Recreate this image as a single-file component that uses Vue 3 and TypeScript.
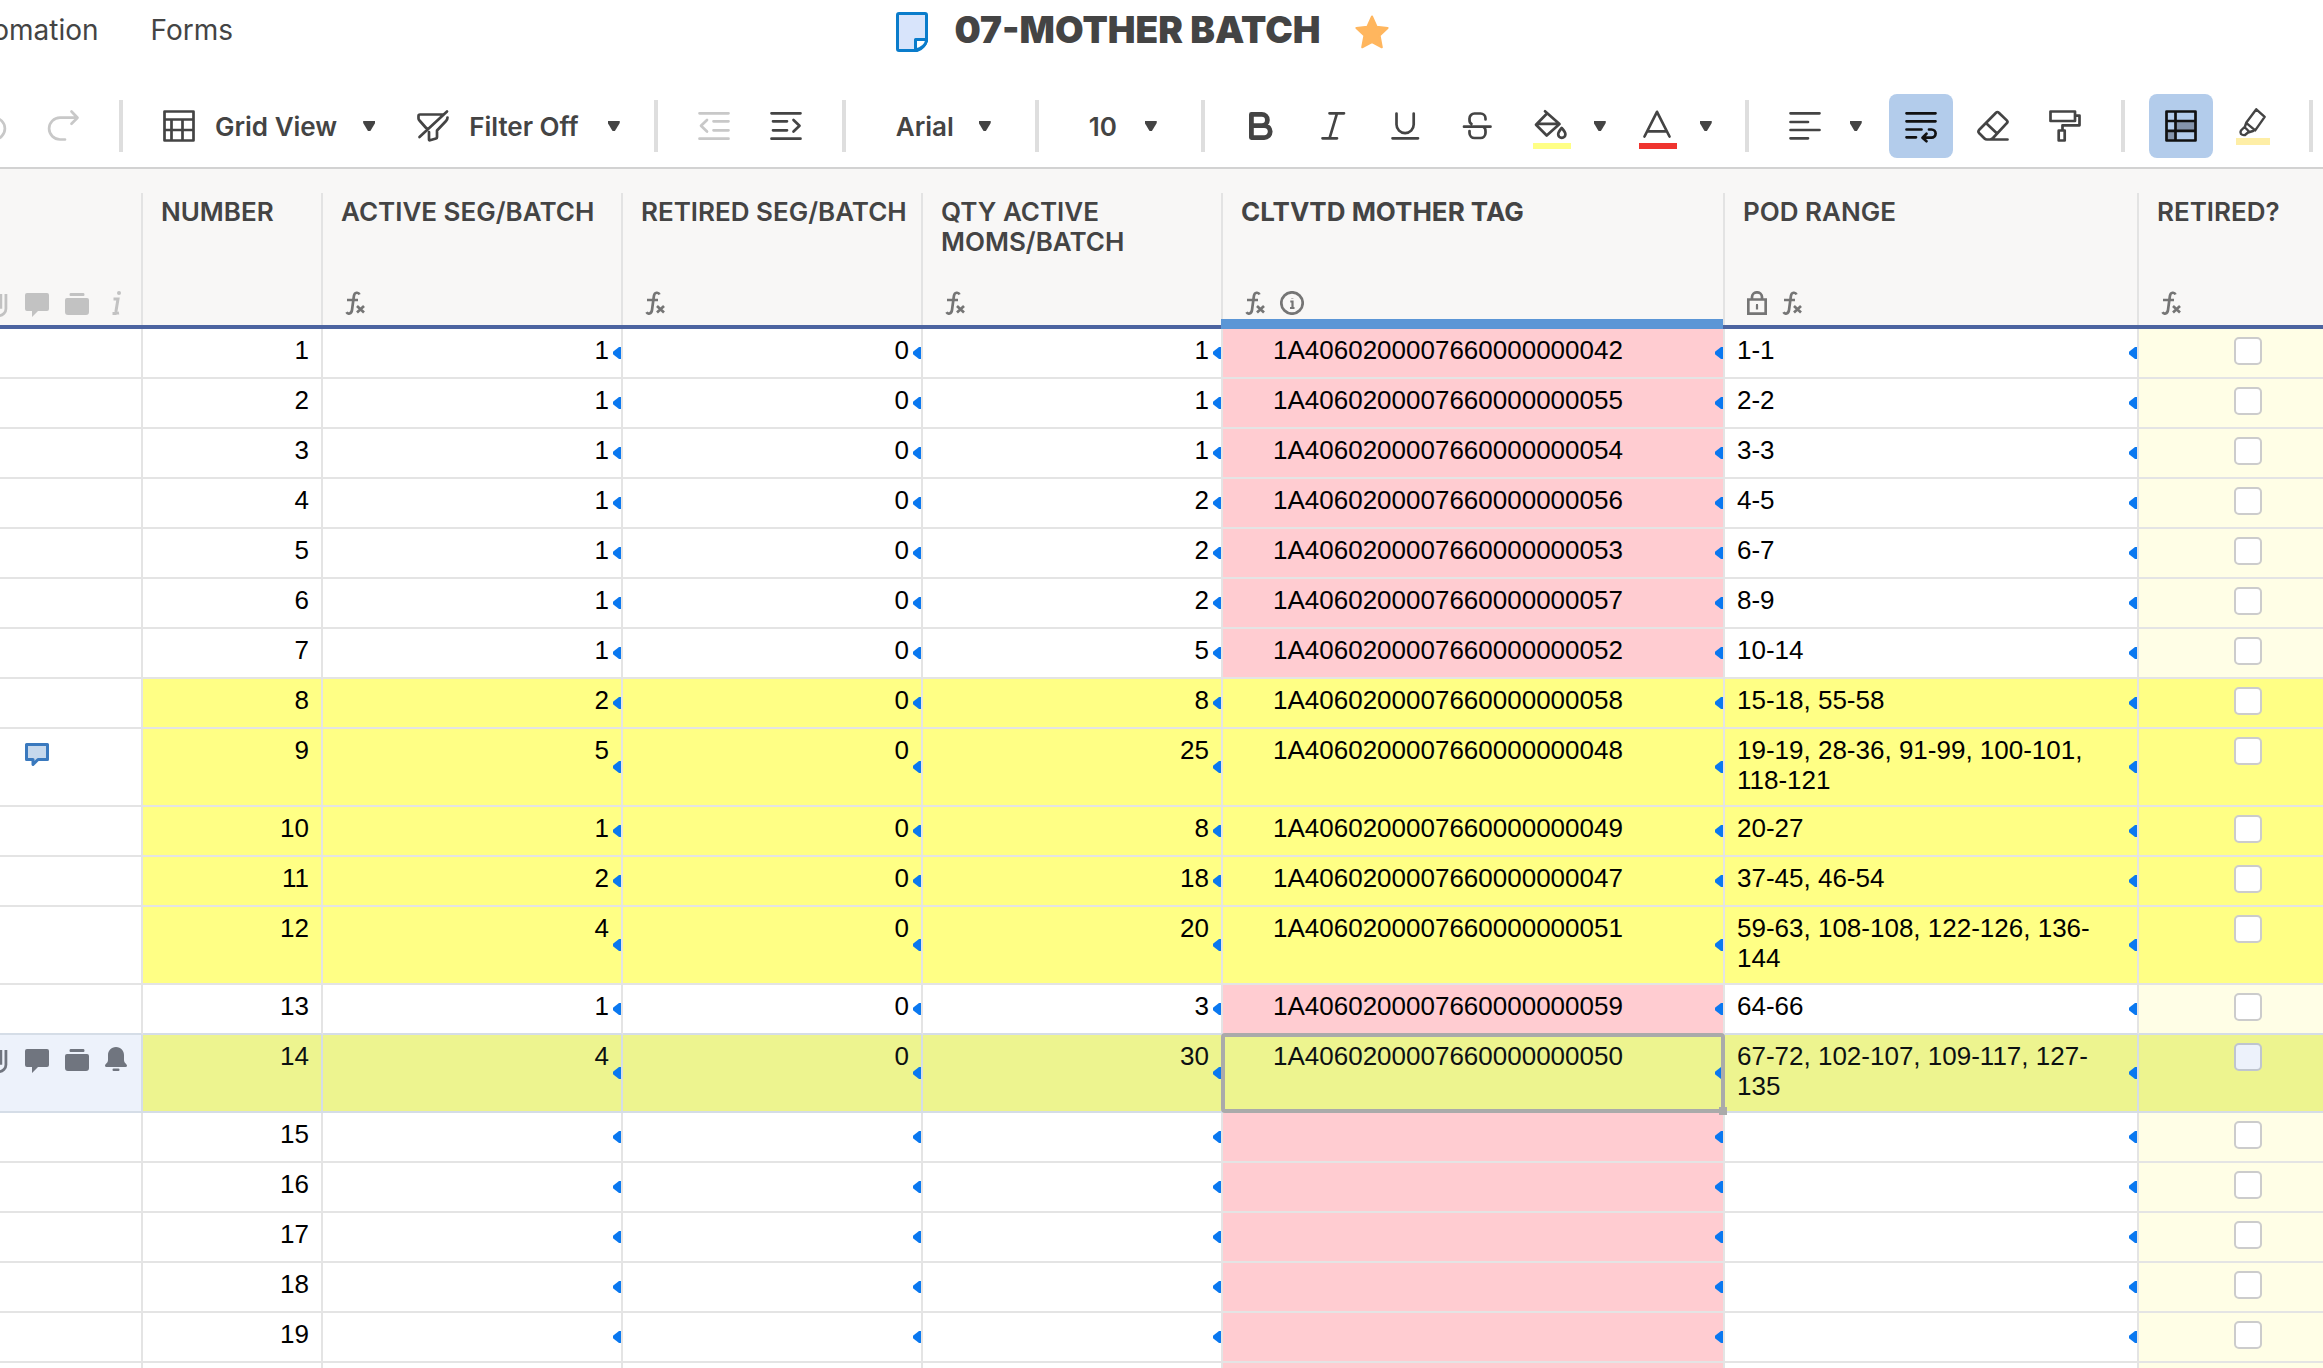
<script setup lang="ts">
import { ref } from 'vue'

interface Row {
  num: number
  active: string
  retired: string
  qty: string
  tag: string
  pods: string
  tone: 'plain' | 'flag'
  comment?: boolean
}

const row = (
  num: number,
  active = '',
  retired = '',
  qty = '',
  tag = '',
  pods = '',
  tone: Row['tone'] = 'plain',
  comment = false,
): Row => ({ num, active, retired, qty, tag: tag && '1A40602000076600000000' + tag, pods, tone, comment })

// A zero number marks the spare row at the end of the sheet.
const rows: Row[] = [
  row(1, '1', '0', '1', '42', '1-1'),
  row(2, '1', '0', '1', '55', '2-2'),
  row(3, '1', '0', '1', '54', '3-3'),
  row(4, '1', '0', '2', '56', '4-5'),
  row(5, '1', '0', '2', '53', '6-7'),
  row(6, '1', '0', '2', '57', '8-9'),
  row(7, '1', '0', '5', '52', '10-14'),
  row(8, '2', '0', '8', '58', '15-18, 55-58', 'flag'),
  row(9, '5', '0', '25', '48', '19-19, 28-36, 91-99, 100-101, 118-121', 'flag', true),
  row(10, '1', '0', '8', '49', '20-27', 'flag'),
  row(11, '2', '0', '18', '47', '37-45, 46-54', 'flag'),
  row(12, '4', '0', '20', '51', '59-63, 108-108, 122-126, 136-144', 'flag'),
  row(13, '1', '0', '3', '59', '64-66'),
  row(14, '4', '0', '30', '50', '67-72, 102-107, 109-117, 127-135', 'flag'),
  row(15),
  row(16),
  row(17),
  row(18),
  row(19),
  row(0),
]

const columns = [
  { key: 'num', label: 'NUMBER', icons: [] as string[] },
  { key: 'active', label: 'ACTIVE SEG/BATCH', icons: ['fx'] },
  { key: 'retired', label: 'RETIRED SEG/BATCH', icons: ['fx'] },
  { key: 'qty', label: 'QTY ACTIVE MOMS/BATCH', icons: ['fx'] },
  { key: 'tag', label: 'CLTVTD MOTHER TAG', icons: ['fx', 'info'] },
  { key: 'pods', label: 'POD RANGE', icons: ['lock', 'fx'] },
  { key: 'done', label: 'RETIRED?', icons: ['fx'] },
]

const selectedRow = ref(14)
const selectedColumn = ref('tag')
const font = ref('Arial')
const size = ref('10')
</script>

<template>
  <div class="app">
    <header class="topbar">
      <nav class="menu">
        <a href="#automation">Automation</a>
        <a href="#forms">Forms</a>
      </nav>
      <div class="title">
        <svg class="sheet" viewBox="0 0 32 40" aria-hidden="true">
          <path d="M3 1.5h26q1.500 0 1.500 1.500v24.500Q29 36 21 38.500H3q-1.500 0-1.500-1.500V3Q1.500 1.500 3 1.500z" fill="#d8e4fb" stroke="#0a7ccb" stroke-width="3" />
          <path d="M19.500 38V27.500H31Q29 36 19.500 38z" fill="#fff" stroke="#0a7ccb" stroke-width="3" stroke-linejoin="round" />
        </svg>
        <h1>07-MOTHER BATCH</h1>
        <button class="star" type="button" aria-label="Favorite">
          <svg viewBox="0 0 34 34"><path d="M17 1.500l4.600 10.200 11 1.200-8 7.600 2.200 11.800L17 27l-9.800 5.300 2.200-11.800-8-7.600 11-1.200z" fill="#ffb65e" stroke="#ffb65e" stroke-width="2" stroke-linejoin="round" /></svg>
        </button>
      </div>
    </header>

    <div class="toolbar" role="toolbar" aria-label="Formatting">
      <div class="history">
        <button class="tool faint" type="button" aria-label="Undo">
          <svg viewBox="0 0 32 32"><path d="M2 7.700H19a10.900 10.900 0 0 1 0 21.800H14M8 1.500L2 7.700l6 6" /></svg>
        </button>
        <button class="tool faint" type="button" aria-label="Redo">
          <svg viewBox="0 0 32 32"><path d="M30 7.700H13a10.900 10.900 0 0 0 0 21.800H18M24.500 1.500l6 6.200-6 6" /></svg>
        </button>
      </div>
      <span class="sep"></span>
      <button class="wide" type="button">
        <svg viewBox="0 0 32 32"><path d="M1.500 1.500h29v29h-29zM1.500 9.500h29M1.500 20h29M8.500 9.500v21M19.500 9.500v21" /></svg>
        <span>Grid View</span><i class="caret"></i>
      </button>
      <button class="wide filter" type="button">
        <svg viewBox="0 0 32 32"><path d="M26 4.500H3q-1.500 0-1.500 1.500v2.500q0 1 1 2L10 19M12 22v7.500q0 1 1 .8l6-1.800q1-.3 1-1.300V20.500l9-9.500q1.500-1.500 1.500-3.500M30 1.500L2.500 27" /></svg>
        <span>Filter Off</span><i class="caret"></i>
      </button>
      <span class="sep"></span>
      <div class="group">
        <button class="tool faint" type="button" aria-label="Outdent">
          <svg viewBox="0 0 32 32"><path d="M1.500 3.300h29M15.500 11.300h15M15.500 20.300h15M1.500 28.700h29M9 10l-6 5.800L9 21.500" /></svg>
        </button>
        <button class="tool" type="button" aria-label="Indent">
          <svg viewBox="0 0 32 32"><path d="M1.500 3.300h29M3 11.300h14M3 20.300h14M1.500 28.700h29M23.500 10l6 5.800-6 5.700" /></svg>
        </button>
      </div>
      <span class="sep"></span>
      <label class="picker font">
        <select v-model="font" aria-label="Font family">
          <option>Arial</option>
          <option>Tahoma</option>
        </select>
        <i class="caret"></i>
      </label>
      <span class="sep"></span>
      <label class="picker size">
        <select v-model="size" aria-label="Font size">
          <option>10</option>
          <option>12</option>
        </select>
        <i class="caret"></i>
      </label>
      <span class="sep"></span>
      <div class="group">
        <button class="tool" type="button" aria-label="Bold">
          <svg viewBox="0 0 32 32"><path stroke-width="4.800" d="M6.400 4.400h10.400a5.500 5.500 0 0 1 0 11.200H6.400zM6.400 15.600h12.800a6 6 0 0 1 0 12H6.400z" /></svg>
        </button>
        <button class="tool" type="button" aria-label="Italic">
          <svg viewBox="0 0 32 32"><path d="M12.500 3.300h14.500M5.500 28.300H20M20 3.300l-7.500 25" /></svg>
        </button>
        <button class="tool" type="button" aria-label="Underline">
          <svg viewBox="0 0 32 32"><path d="M7.500 3.500v11a8.600 8.600 0 0 0 17.200 0v-11M3.500 28.300H29" /></svg>
        </button>
        <button class="tool" type="button" aria-label="Strikethrough">
          <svg viewBox="0 0 32 32"><path d="M24.500 9.500v-1a5 5 0 0 0-5-5h-6a5 5 0 0 0-5 5V10q0 3 2 4M3 16.700h26.500M8.500 21v2a5 5 0 0 0 5 5h6a5 5 0 0 0 5-5v-2q0-3-2-4" /></svg>
        </button>
        <button class="split" type="button" aria-label="Background color">
          <svg class="swatch" viewBox="0 0 38 32">
            <path d="M12 1.300l14.500 12.800L13.700 25.500 3 14.700 14 3.500M4 13.900h21" />
            <path d="M28.700 18q3.700 4 3.700 6.200a3.500 3.500 0 0 1-7.200 0q0-2.200 3.500-6.200z" />
            <path d="M0 33h38v6H0z" fill="#ffff85" stroke="none" />
          </svg>
          <i class="caret"></i>
        </button>
        <button class="split" type="button" aria-label="Text color">
          <svg class="swatch" viewBox="0 0 38 32">
            <path d="M5.500 26.500L18 1.800l12.500 24.700M9 21.300h18" />
            <path d="M0 33h38v6H0z" fill="#ef342f" stroke="none" />
          </svg>
          <i class="caret"></i>
        </button>
      </div>
      <span class="sep"></span>
      <div class="group">
        <button class="split align" type="button" aria-label="Alignment">
          <svg viewBox="0 0 32 32"><path d="M1.500 3.300h29M1.500 12h17.500M1.500 20h29M1.500 28.300h17.500" /></svg>
          <i class="caret"></i>
        </button>
        <button class="tool on" type="button" aria-label="Wrap text" aria-pressed="true">
          <svg viewBox="0 0 32 32"><path d="M1.500 3.300h29M1.500 11.300h29M1.500 19.500h15M1.500 27.300H11M24 19.500h2.500a4 4 0 0 1 0 8.200H18M21.500 23.800l-4 3.900 4 3.500" /></svg>
        </button>
        <button class="tool" type="button" aria-label="Clear format">
          <svg viewBox="0 0 32 32"><path d="M19 2.700q1.400-1.400 2.800 0l8 7.700q1.400 1.400 0 2.800L16 28q-1.500 1.500-3 1.500H10q-1.500 0-2.500-1L2 23q-1.200-1.500 0-3zM9.500 13.500l10.300 9.700M10 29.500h20.500" /></svg>
        </button>
        <button class="tool" type="button" aria-label="Format painter">
          <svg viewBox="0 0 32 32"><path d="M1.500 1.500h24.500v9.500H1.500zM26 5.600h4.500v9.700H13.500V20M9.700 20.500h6v10h-6z" /></svg>
        </button>
      </div>
      <span class="sep"></span>
      <div class="group">
        <button class="tool on" type="button" aria-label="Conditional formatting" aria-pressed="true">
          <svg viewBox="0 0 32 32">
            <path d="M11 11h19v10H11zM2 21h9v9H2z" fill="#8494ab" stroke="none" />
            <path d="M1.500 1.500h29v29h-29zM1.500 11h29M1.500 20.800h29M10.500 1.500v29" />
          </svg>
        </button>
        <button class="tool" type="button" aria-label="Highlight changes">
          <svg class="marker" viewBox="0 0 34 32">
            <path d="M0 28h34v7H0z" fill="#feeea6" stroke="none" />
            <path stroke-width="2.400" d="M20.300-.700l8.400 7.600-9.500 13.500-9-7.600zM10 13.500l-1 3-4 4q-1 1.500 0 3.500 1.500 1.500 4 1l3-2.500 5-1.500M8.500 17l4.500 4.500" />
          </svg>
        </button>
      </div>
      <span class="sep"></span>
    </div>

    <main class="grid">
      <table>
        <colgroup>
          <col class="c-gutter" /><col class="c-num" /><col class="c-calc" /><col class="c-calc" /><col class="c-calc" />
          <col class="c-tag" /><col class="c-pods" /><col class="c-done" />
        </colgroup>
        <thead>
          <tr>
            <th class="gutter">
              <div class="head">
                <div class="marks">
                  <svg class="clip" viewBox="0 0 20 26"><path d="M17.500 1v16a7.500 7.500 0 0 1-15 0V6M12 1v16" /></svg>
                  <svg viewBox="0 0 24 24"><path d="M2 0h20q2 0 2 2v14q0 2-2 2h-9l-6 6v-6H2q-2 0-2-2V2q0-2 2-2z" /></svg>
                  <svg viewBox="0 0 24 24"><path d="M5.500 0h13q1 0 1 1.500T18.500 3h-13q-1 0-1-1.500T5.500 0zM2 5h20q2 0 2 2v12q0 3-3 3H3q-3 0-3-3V7q0-2 2-2z" /></svg>
                  <svg viewBox="0 0 24 24"><path class="line" d="M8.500 6h4.500l-2 12q-.4 2.600 3 2M7.500 20.500h4" /><circle cx="14" cy="0" r="2" /></svg>
                </div>
              </div>
            </th>
            <th v-for="c in columns" :key="c.key" scope="col" :class="{ picked: c.key === selectedColumn }">
              <div class="head">
                <span class="label">{{ c.label }}</span>
                <div class="badges">
                  <template v-for="i in c.icons" :key="i">
                    <svg v-if="i === 'fx'" class="narrow" viewBox="0 0 20 24"><path d="M14.500 3.500c-1-2.500-5-2.600-5.600 1.500L7 19c-.5 3.800-4.200 4.600-5.500 2.200M2 9h11M12 15l7 6.500M19 15l-7 6.500" /></svg>
                    <svg v-else-if="i === 'info'" viewBox="0 0 24 24"><circle cx="12" cy="12" r="10.700" /><path stroke-width="2.200" d="M10.300 10.500H12.500v6.500M10 17h4.500M12.300 7v.5" /></svg>
                    <svg v-else class="narrow" viewBox="0 0 20 24"><path d="M1.300 8.500h17.400v14.200H1.300zM5 8V6a5 4.700 0 0 1 10 0v2" /><path stroke-width="2.200" d="M10 14v4.500M9 14h2" /></svg>
                  </template>
                </div>
              </div>
            </th>
          </tr>
        </thead>
        <tbody>
          <tr v-for="r in rows" :key="r.num" :class="[r.tone, { current: r.num === selectedRow, before: r.num === selectedRow - 1 }]">
            <td class="gutter">
              <div v-if="r.comment" class="marks note">
                <svg viewBox="0 0 24 24"><path d="M1.500 1.500h21v15H13l-5 5v-5H1.500z" /></svg>
              </div>
              <div v-else-if="r.num === selectedRow" class="marks">
                <svg class="clip" viewBox="0 0 20 26"><path d="M17.500 1v16a7.500 7.500 0 0 1-15 0V6M12 1v16" /></svg>
                <svg viewBox="0 0 24 24"><path d="M2 0h20q2 0 2 2v14q0 2-2 2h-9l-6 6v-6H2q-2 0-2-2V2q0-2 2-2z" /></svg>
                <svg viewBox="0 0 24 24"><path d="M5.500 0h13q1 0 1 1.500T18.500 3h-13q-1 0-1-1.500T5.500 0zM2 5h20q2 0 2 2v12q0 3-3 3H3q-3 0-3-3V7q0-2 2-2z" /></svg>
                <svg class="bell" viewBox="0 0 22 24"><path d="M11-2c5 0 8 4 8 8v5c0 3 3 4 3 5.500q0 1.500-1.500 1.500h-19Q0 18 0 16.500C0 15 3 14 3 11V6c0-4 3-8 8-8zM8.500 19.500h5q1 0 1 1.300T13.500 22.100h-5q-1 0-1-1.300t1-1.300z" /></svg>
              </div>
            </td>
            <td class="end">{{ r.num || '' }}</td>
            <td class="end calc">{{ r.active }}</td>
            <td class="end calc">{{ r.retired }}</td>
            <td class="end calc">{{ r.qty }}</td>
            <td class="tag calc" :class="{ focus: r.num === selectedRow }">{{ r.tag }}<i v-if="r.num === selectedRow" class="handle"></i></td>
            <td class="pods calc">{{ r.pods }}</td>
            <td class="done"><input type="checkbox" :aria-label="'Retired, row ' + r.num" /></td>
          </tr>
        </tbody>
      </table>
    </main>
  </div>
</template>

<style>
body {
  margin: 0;
  background: #fff;
}
</style>

<style scoped>
.app {
  display: flex;
  flex-direction: column;
  height: 100vh;
  overflow: hidden;
  color: #444;
  font-family: Inter, 'Liberation Sans', sans-serif;
  font-size: 26px;
}

button,
select {
  border: 0;
  padding: 0;
  background: none;
  color: inherit;
  font: inherit;
  font-weight: 600;
}

.topbar {
  display: grid;
  grid-template-columns: 1fr auto 1fr;
  align-items: center;
  flex: none;
  height: 64px;
  padding-right: 38px;
}

.menu {
  display: flex;
  justify-content: flex-end;
  gap: 52px;
  width: 233px;
  padding-bottom: 4px;
  overflow: hidden;
  font-size: 28px;
}

.menu a {
  color: inherit;
  text-decoration: none;
}

.title {
  display: flex;
  align-items: center;
}

.sheet {
  width: 32px;
  height: 40px;
}

h1 {
  margin: 0 34px 0 26px;
  padding-bottom: 4px;
  font-size: 37px;
  font-weight: 900;
  line-height: 44px;
}

.star,
.star svg {
  display: block;
  width: 34px;
  height: 34px;
}

.toolbar {
  display: flex;
  align-items: center;
  flex: none;
  padding: 30px 0 9px;
  border-bottom: 2px solid #d2d2d2;
}

.toolbar > * {
  flex: none;
}

.history {
  display: flex;
  justify-content: flex-end;
  gap: 8px;
  width: 95px;
  overflow: hidden;
}

.sep {
  width: 4px;
  height: 52px;
  margin: 0 24px;
  background: #dedede;
}

.group {
  display: flex;
  gap: 8px;
}

.toolbar svg {
  flex: none;
  width: 32px;
  height: 32px;
  overflow: visible;
  fill: none;
  stroke: currentColor;
  stroke-width: 2.7;
  stroke-linecap: round;
  stroke-linejoin: round;
}

.toolbar .swatch {
  width: 38px;
}

.toolbar .marker {
  width: 34px;
}

.tool {
  display: flex;
  align-items: center;
  justify-content: center;
  flex: none;
  width: 64px;
  height: 64px;
  border-radius: 8px;
}

.tool.faint {
  color: #c8c8c8;
}

.tool.on {
  background: #b3cceb;
  color: #111;
}

.wide {
  display: flex;
  align-items: center;
  height: 64px;
  padding: 0 16px;
}

.wide span {
  margin: 0 26px 0 20px;
  white-space: nowrap;
}

.wide.filter {
  margin-left: 10px;
  padding-right: 10px;
}

.wide.filter span {
  margin-right: 29px;
}

.split {
  display: flex;
  align-items: center;
  gap: 23px;
  height: 64px;
  padding: 0 9px 0 16px;
}

.split.align {
  gap: 29px;
  padding-right: 19px;
}

.caret {
  flex: none;
  width: 12px;
  height: 10px;
  background: #444;
  clip-path: polygon(0 0, 100% 0, 100% 20%, 60% 100%, 40% 100%, 0 20%);
}

.picker {
  display: flex;
  align-items: center;
  height: 64px;
  padding: 0 20px 0 26px;
}

.picker select {
  appearance: none;
  flex: 1;
  min-width: 0;
}

.picker.font {
  width: 95px;
}

.picker.size {
  width: 68px;
}

.grid {
  flex: 1;
  min-height: 0;
  overflow: hidden;
}

table {
  width: 2359px;
  table-layout: fixed;
  border-collapse: separate;
  border-spacing: 0;
}

.c-gutter {
  width: 143px;
}

.c-num {
  width: 180px;
}

.c-calc {
  width: 300px;
}

.c-tag {
  width: 502px;
}

.c-pods {
  width: 414px;
}

.c-done {
  width: 220px;
}

th {
  position: relative;
  padding: 24px 0 0;
  border-bottom: 4px solid #4c64a0;
  background: #f8f7f6;
  text-align: left;
  font-weight: 600;
}

.head {
  display: flex;
  flex-direction: column;
  justify-content: space-between;
  box-sizing: border-box;
  height: 132px;
  padding: 4px 0 10px 18px;
  border-right: 2px solid #e3e3e3;
}

.label {
  line-height: 30px;
}

th.picked {
  font-weight: 700;
}

th.picked::after {
  content: '';
  position: absolute;
  right: 2px;
  bottom: -4px;
  left: -2px;
  height: 10px;
  background: #5b96d6;
}

.badges {
  display: flex;
  gap: 15px;
  padding-left: 4px;
}

.badges svg {
  width: 24px;
  height: 24px;
  fill: none;
  stroke: #757575;
  stroke-width: 2.7;
}

.badges .narrow {
  width: 20px;
}

.marks {
  display: flex;
  justify-content: flex-end;
  gap: 16px;
}

.marks svg {
  flex: none;
  width: 24px;
  height: 24px;
  overflow: visible;
  fill: currentColor;
}

.marks .clip {
  width: 20px;
}

.marks .bell {
  width: 22px;
}

.marks .clip path,
.marks .line {
  fill: none;
  stroke: currentColor;
  stroke-width: 3;
}

th.gutter .head {
  justify-content: flex-end;
  padding: 0 12px 8px 0;
  color: #c2c2c2;
}

td {
  position: relative;
  box-sizing: border-box;
  height: 50px;
  padding: 6px 12px 10px;
  border-right: 2px solid #e4e4e4;
  border-bottom: 2px solid #e4e4e4;
  color: #000;
  font: 26px/30px 'Liberation Sans', Arial, sans-serif;
  vertical-align: top;
}

td.gutter {
  padding: 14px 14px 0 0;
  overflow: hidden;
  color: #70757f;
}

td .note {
  justify-content: flex-start;
  padding-left: 25px;
}

.note path {
  fill: #c6d8ec;
  stroke: #3a79be;
  stroke-width: 3;
  stroke-linejoin: round;
}

.end {
  text-align: right;
}

.tag {
  padding-left: 50px;
  background: #ffccd1;
}

.pods {
  padding-right: 30px;
}

.done {
  padding: 8px 0 0;
  background: #fffee6;
  text-align: center;
}

.calc::after {
  content: '';
  position: absolute;
  top: calc(50% - 6px);
  right: 0;
  width: 8px;
  height: 12px;
  background: #0a78f0;
  clip-path: polygon(0 40%, 75% 0, 100% 0, 100% 100%, 75% 100%, 0 60%);
}

.flag td:not(.gutter) {
  background: #ffff85;
}

.before td {
  border-bottom-color: #d5dde7;
}

.current td {
  border-color: #d5dde7;
  background: #edf2fb;
  color: #0c1011;
}

.current td.gutter {
  color: #70757f;
}

.current.flag td:not(.gutter) {
  background: #edf48f;
}

.focus::before {
  content: '';
  position: absolute;
  z-index: 1;
  inset: -2px;
  border: 4px solid #aaa;
  border-radius: 4px;
}

.handle {
  position: absolute;
  z-index: 2;
  right: -4px;
  bottom: -4px;
  width: 8px;
  height: 8px;
  background: #aaa;
}

input[type='checkbox'] {
  appearance: none;
  display: inline-block;
  box-sizing: border-box;
  width: 28px;
  height: 28px;
  margin: 0;
  border: 2px solid #ccc;
  border-radius: 5px;
  background: #fff;
  vertical-align: top;
}

.current input[type='checkbox'] {
  border-color: #bfc5cf;
  background: #edf2fb;
}
</style>
